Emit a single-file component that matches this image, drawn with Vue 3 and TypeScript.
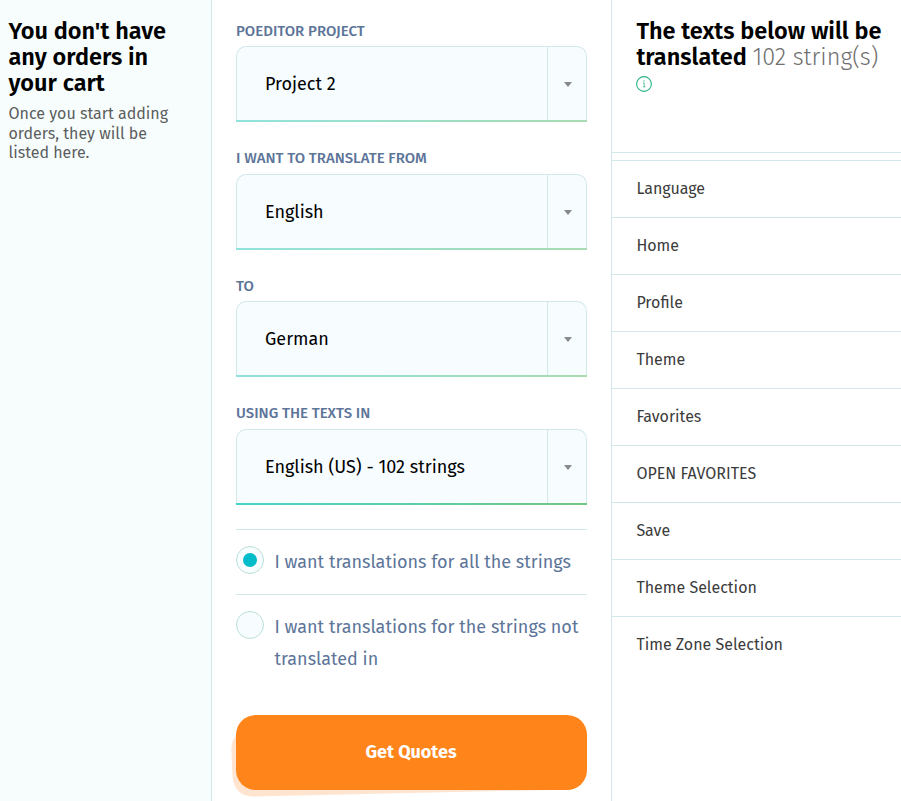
<script setup lang="ts">
import { ref } from 'vue'

interface Field {
  label: string
  value: string
  kind: string
}

const fields: Field[] = [
  { label: 'POEDITOR PROJECT', value: 'Project 2', kind: 'project' },
  { label: 'I WANT TO TRANSLATE FROM', value: 'English', kind: 'source' },
  { label: 'TO', value: 'German', kind: 'target' },
  { label: 'USING THE TEXTS IN', value: 'English (US) - 102 strings', kind: 'texts-in' },
]

const options: string[][] = [
  ['I want translations for all the strings'],
  ['I want translations for the strings not', 'translated in'],
]
const selected = ref(0)

const strings: string[] = [
  'Language', 'Home', 'Profile', 'Theme', 'Favorites',
  'OPEN FAVORITES', 'Save', 'Theme Selection', 'Time Zone Selection',
]
</script>

<template>
  <div class="page">
    <aside class="cart">
      <h2 class="title">You don't have<br>any orders in<br>your cart</h2>
      <p class="hint">Once you start adding<br>orders, they will be<br>listed here.</p>
    </aside>

    <main class="order">
      <div v-for="field in fields" :key="field.kind" class="field">
        <div class="label"><span>{{ field.label }}</span></div>
        <div class="select">
          <span class="value">{{ field.value }}</span>
          <span class="toggle">
            <svg width="8" height="5" viewBox="0 0 8 5"><path d="M0 0h8L4 5z" fill="#888" /></svg>
          </span>
        </div>
        <div class="bar" :class="field.kind"></div>
      </div>

      <div class="options">
        <div v-for="(lines, i) in options" :key="i" class="option" @click="selected = i">
          <span class="radio"><i v-if="selected === i" class="dot"></i></span>
          <span class="option-text"><span v-for="line in lines" :key="line" class="line">{{ line }}</span></span>
        </div>
      </div>

      <button class="quote" type="button">
        <svg class="shade" width="360" height="84" viewBox="0 0 360 84">
          <path d="M-.7 34Q0 17 18 12L340 2V74.5L22 81.5Q2 81.5 .5 61Z" fill="#ffe5d0" />
        </svg>
        <span class="face"><span>Get Quotes</span></span>
      </button>
    </main>

    <section class="texts">
      <header class="texts-head">
        <h2 class="title">The texts below will be<br>translated <span class="count">102 string(s)</span></h2>
        <svg class="info" width="16" height="16" viewBox="0 0 16 16" fill="none" stroke="#2fb58c">
          <circle cx="8" cy="8" r="7.4" stroke-width="1.1" />
          <path d="M7 6.9H8.2V10.8M6.9 10.8H9.4" stroke-width=".8" />
          <circle cx="8" cy="4.9" r=".7" fill="#2fb58c" stroke="none" />
        </svg>
      </header>
      <ul class="strings">
        <li v-for="text in strings" :key="text"><span>{{ text }}</span></li>
      </ul>
    </section>
  </div>
</template>

<style>
body {
  margin: 0;
  overflow: hidden;
  background: #fff;
}
</style>

<style scoped>
.page {
  display: grid;
  grid-template-columns: 212px 400px 289px;
  height: 801px;
  overflow: hidden;
  font-family: "Fira Sans", "Noto Sans", "Open Sans", sans-serif;
  color: #000;
}
.cart,
.order {
  box-sizing: border-box;
  border-right: 1px solid #d2e8eb;
}
.cart {
  padding: 18px 8.5px;
  background: #f7fdfd;
}
.title {
  margin: 0;
  font-size: 23.5px;
  font-weight: 600;
  line-height: 26px;
  white-space: nowrap;
}
.hint {
  margin: 8px 0 0;
  font-size: 16px;
  line-height: 19.5px;
  color: #5c5e5e;
  white-space: nowrap;
}
.order {
  padding: 15.6px 24px 0;
}
.field {
  height: 127.5px;
}
.label {
  height: 30.5px;
  line-height: 30px;
  font-size: 15px;
  font-weight: 500;
  color: #5d7599;
  white-space: nowrap;
}
.select {
  display: flex;
  box-sizing: border-box;
  height: 74.2px;
  border: 1px solid #d2e8eb;
  border-bottom: 0;
  border-radius: 10px 10px 0 0;
  background: #f7fcff;
}
.bar {
  height: 2px;
  background: linear-gradient(90deg, #91e2dc, #a8dbb1);
}
.bar.texts-in {
  background: linear-gradient(90deg, #46d2cc, #74c780);
}
.value {
  flex: 1;
  padding-left: 28px;
  font-size: 18px;
  line-height: 74px;
}
.toggle {
  display: flex;
  align-items: center;
  justify-content: center;
  width: 39px;
  padding-top: 2px;
  padding-left: 2px;
  box-sizing: border-box;
  border-left: 1px solid #d2e8eb;
}
.options {
  margin-top: 3.4px;
}
.option {
  display: flex;
  gap: 10.5px;
  min-height: 48px;
  padding-top: 16px;
  border-top: 1px solid #d2e8eb;
}
.radio {
  display: flex;
  align-items: center;
  justify-content: center;
  flex: none;
  box-sizing: border-box;
  width: 28px;
  height: 28px;
  border: 1px solid #b9e0d5;
  border-radius: 50%;
  background: #f7fcff;
}
.dot {
  width: 14px;
  height: 14px;
  border-radius: 50%;
  background: #00bcc9;
}
.line {
  display: block;
  font-size: 18px;
  line-height: 32px;
  color: #5d7599;
  white-space: nowrap;
}
.quote {
  position: relative;
  display: block;
  width: 351px;
  height: 75px;
  margin-top: 40px;
  padding: 0;
  border: 0;
  background: none;
  font: inherit;
}
.shade {
  position: absolute;
  left: -4px;
  top: 0;
  overflow: visible;
}
.face {
  position: relative;
  display: flex;
  align-items: center;
  justify-content: center;
  box-sizing: border-box;
  height: 100%;
  padding: 0 1px 1px 0;
  border-radius: 20px;
  background: #ff8419;
  color: #fff;
  font-size: 18px;
  font-weight: 700;
}
.texts-head {
  box-sizing: border-box;
  height: 153px;
  padding: 18px 0 0 24.4px;
  border-bottom: 1px solid #d2e8eb;
}
.count {
  font-weight: 300;
  color: #707070;
}
.info {
  display: block;
  margin-top: 6px;
}
.strings {
  margin: 7px 0 0;
  padding: 0;
  list-style: none;
}
.strings li {
  box-sizing: border-box;
  height: 57px;
  padding-left: 24.4px;
  border-top: 1px solid #d2e8eb;
  font-size: 16px;
  line-height: 55px;
  color: #3c3c3c;
  white-space: nowrap;
}
</style>
